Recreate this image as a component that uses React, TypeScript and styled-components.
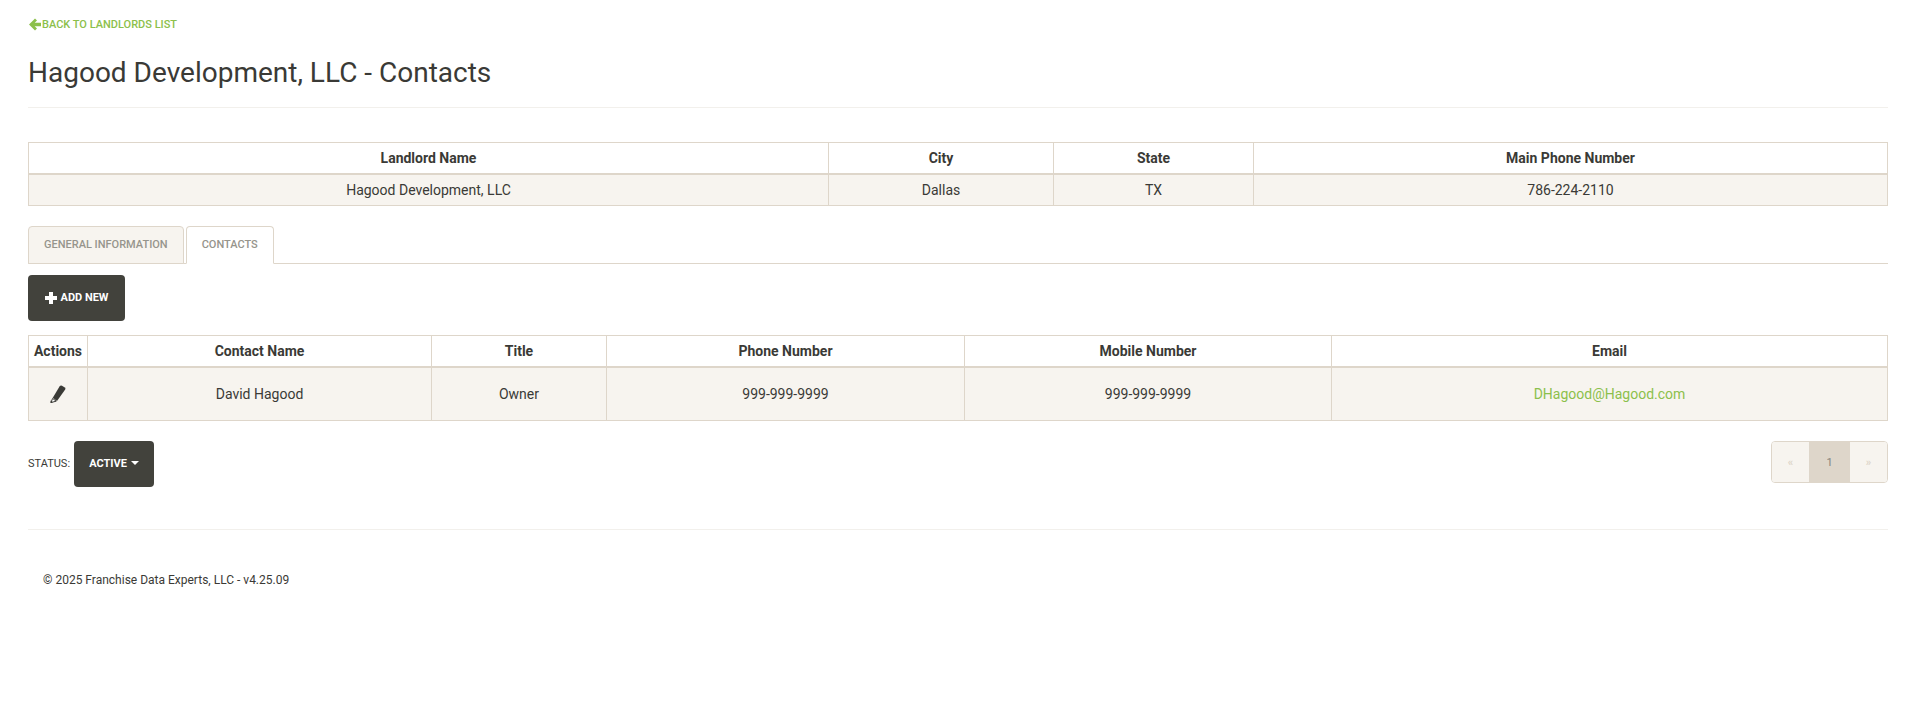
import React from "react";
import styled, { createGlobalStyle } from "styled-components";

const border = "#ded6ca";
const stripe = "#f7f4ef";
const dark = "#42423c";
const green = "#8cc04b";
const ink = "#3a3a36";

const GlobalStyle = createGlobalStyle`
  html, body {
    margin: 0;
    padding: 0;
    background: #fff;
    font-family: Roboto, "Liberation Sans", sans-serif;
    font-size: 14px;
    color: ${ink};
  }
`;

const Page = styled.div`
  padding: 0 27px 0 28px;
`;

const BackLink = styled.a`
  display: flex;
  align-items: center;
  height: 18px;
  margin-top: 16px;
  color: ${green};
  font-size: 11px;
  font-weight: 500;
  line-height: 18px;
  text-transform: uppercase;
  text-decoration: none;
`;

const BackIcon = styled.svg`
  display: block;
  margin: -2px 1px 0 1px;
  fill: currentColor;
`;

const Title = styled.h1`
  margin: 23px 0 0;
  font-size: 28px;
  font-weight: 400;
  line-height: 32px;
  color: ${ink};
`;

const Rule = styled.hr<{ $top: number; $bottom: number }>`
  border: 0;
  border-top: 1px solid #f2f0ec;
  margin: ${(p) => `${p.$top}px 0 ${p.$bottom}px`};
`;

const Table = styled.table`
  width: 100%;
  table-layout: fixed;
  border-collapse: collapse;
`;

const HeadCell = styled.th`
  border: 1px solid ${border};
  border-bottom-width: 2px;
  height: 29px;
  padding: 0 4px 1px;
  font-size: 14px;
  font-weight: 700;
  line-height: 20px;
  text-align: center;
  color: ${ink};
`;

const Row = styled.tr`
  background: ${stripe};
`;

const Cell = styled.td<{ $tall?: boolean }>`
  border: 1px solid ${border};
  height: ${(p) => (p.$tall ? 51 : 29)}px;
  padding: 0 4px 1px;
  font-size: 14px;
  line-height: 20px;
  text-align: center;
`;

const Col = styled.col<{ $w: number }>`
  width: ${(p) => p.$w}px;
`;

const Tabs = styled.div`
  display: flex;
  align-items: flex-end;
  gap: 2px;
  margin-top: 20px;
  border-bottom: 1px solid ${border};
`;

const Tab = styled.a<{ $active?: boolean }>`
  display: block;
  height: 36px;
  margin-bottom: -1px;
  padding: 0 15px;
  border: 1px solid ${border};
  border-bottom-color: ${(p) => (p.$active ? "#fff" : border)};
  border-radius: 4px 4px 0 0;
  background: ${(p) => (p.$active ? "#fff" : stripe)};
  color: #96948c;
  font-size: 11px;
  font-weight: 500;
  line-height: 35px;
  text-transform: uppercase;
`;

const DarkButton = styled.button`
  display: inline-flex;
  align-items: center;
  justify-content: center;
  border: 0;
  border-radius: 4px;
  background: ${dark};
  color: #fff;
  font-family: inherit;
  font-size: 11px;
  font-weight: 700;
  text-transform: uppercase;
`;

const AddButton = styled(DarkButton)`
  width: 97px;
  height: 46px;
  margin: 11px 0 14px;
  padding: 0 0 1px;
  gap: 4px;
`;

const ToolIcon = styled.svg`
  display: block;
  fill: currentColor;
`;

const IconCentre = styled.span`
  display: flex;
  justify-content: center;
`;

const EmailLink = styled.a`
  color: ${green};
  text-decoration: none;
`;

const Footer = styled.div`
  display: flex;
  align-items: flex-start;
  justify-content: space-between;
  margin-top: 20px;
`;

const StatusGroup = styled.div`
  display: flex;
  align-items: center;
  gap: 4px;
  font-size: 11px;
  text-transform: uppercase;
`;

const StatusLabel = styled.span`
  margin-top: -2px;
`;

const StatusButton = styled(DarkButton)`
  width: 80px;
  height: 46px;
  padding: 0 0 2px;
  gap: 4px;
`;

const Caret = styled.span`
  width: 0;
  height: 0;
  border-left: 4px solid transparent;
  border-right: 4px solid transparent;
  border-top: 4px solid #fff;
`;

const Pager = styled.div`
  display: flex;
  height: 42px;
  border: 1px solid ${border};
  border-radius: 4px;
  overflow: hidden;
  box-sizing: border-box;
`;

const PageItem = styled.span<{ $current?: boolean; $w: number }>`
  display: flex;
  align-items: center;
  justify-content: center;
  width: ${(p) => p.$w}px;
  background: ${(p) => (p.$current ? border : stripe)};
  color: ${(p) => (p.$current ? "#85837c" : border)};
  font-size: 11px;
  font-weight: ${(p) => (p.$current ? 400 : 700)};
`;

const Copyright = styled.p`
  margin: 0 0 0 15px;
  font-size: 12px;
  line-height: 18px;
  color: ${ink};
`;

const ArrowLeft = () => (
  <BackIcon width="12" height="13" viewBox="0 0 12 13">
    <path d="M0 6.500 6 .5 8 2.500 5.700 4.700H12v3.600H5.700L8 10.500 6 12.500z" />
  </BackIcon>
);

const Plus = () => (
  <ToolIcon width="12" height="12" viewBox="0 0 12 12">
    <path d="M4 0h4v4h4v4H8v4H4V8H0V4h4z" />
  </ToolIcon>
);

const Pencil = () => (
  <ToolIcon width="16" height="18" viewBox="0 0 16 18">
    <path d="M9.500 1.500Q10.500 0 12 .7L14.800 2.400Q16 3.200 15.200 4.600L7 16 2.800 12.800z" />
    <path d="M2.600 13.400 6.200 16.200 1 17.500z" fill="#fff" stroke={ink} strokeWidth="1" />
    <path d="M.6 15.500 2.900 17.200.5 18z" />
  </ToolIcon>
);

const landlordCols = [800, 225, 200, 634];
const contactCols = [59, 344, 175, 358, 367, 556];

export default function App() {
  return (
    <Page>
      <GlobalStyle />
      <BackLink href="#">
        <ArrowLeft />
        Back to Landlords List
      </BackLink>
      <Title>Hagood Development, LLC - Contacts</Title>
      <Rule $top={18} $bottom={34} />

      <Table>
        <colgroup>
          {landlordCols.map((w, i) => (
            <Col key={i} $w={w} />
          ))}
        </colgroup>
        <thead>
          <tr>
            <HeadCell>Landlord Name</HeadCell>
            <HeadCell>City</HeadCell>
            <HeadCell>State</HeadCell>
            <HeadCell>Main Phone Number</HeadCell>
          </tr>
        </thead>
        <tbody>
          <Row>
            <Cell>Hagood Development, LLC</Cell>
            <Cell>Dallas</Cell>
            <Cell>TX</Cell>
            <Cell>786-224-2110</Cell>
          </Row>
        </tbody>
      </Table>

      <Tabs>
        <Tab>General Information</Tab>
        <Tab $active>Contacts</Tab>
      </Tabs>

      <AddButton>
        <Plus />
        Add New
      </AddButton>

      <Table>
        <colgroup>
          {contactCols.map((w, i) => (
            <Col key={i} $w={w} />
          ))}
        </colgroup>
        <thead>
          <tr>
            <HeadCell>Actions</HeadCell>
            <HeadCell>Contact Name</HeadCell>
            <HeadCell>Title</HeadCell>
            <HeadCell>Phone Number</HeadCell>
            <HeadCell>Mobile Number</HeadCell>
            <HeadCell>Email</HeadCell>
          </tr>
        </thead>
        <tbody>
          <Row>
            <Cell $tall>
              <IconCentre>
                <Pencil />
              </IconCentre>
            </Cell>
            <Cell $tall>David Hagood</Cell>
            <Cell $tall>Owner</Cell>
            <Cell $tall>999-999-9999</Cell>
            <Cell $tall>999-999-9999</Cell>
            <Cell $tall>
              <EmailLink href="#">DHagood@Hagood.com</EmailLink>
            </Cell>
          </Row>
        </tbody>
      </Table>

      <Footer>
        <StatusGroup>
          <StatusLabel>Status:</StatusLabel>
          <StatusButton>
            Active
            <Caret />
          </StatusButton>
        </StatusGroup>
        <Pager>
          <PageItem $w={37}>«</PageItem>
          <PageItem $w={41} $current>
            1
          </PageItem>
          <PageItem $w={37}>»</PageItem>
        </Pager>
      </Footer>

      <Rule $top={42} $bottom={41} />
      <Copyright>© 2025 Franchise Data Experts, LLC - v4.25.09</Copyright>
    </Page>
  );
}
